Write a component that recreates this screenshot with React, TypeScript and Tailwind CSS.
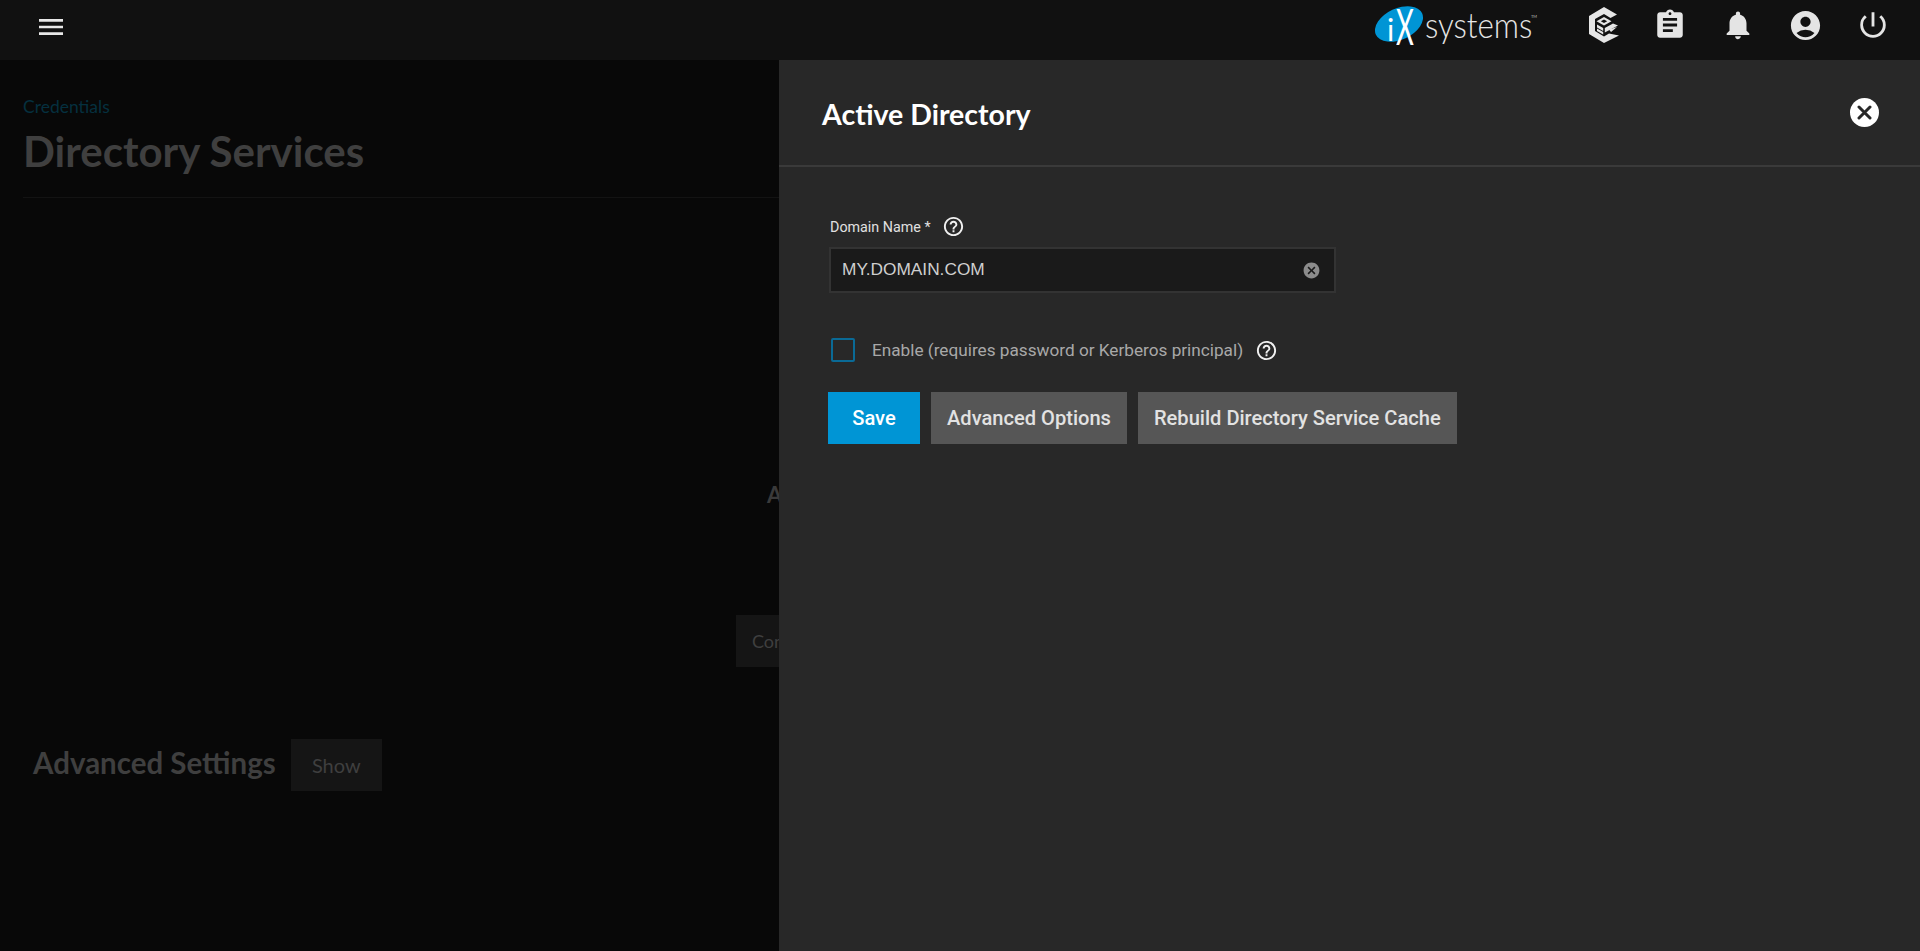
import React from 'react';
import { MdMenu, MdAssignment, MdNotifications, MdAccountCircle, MdPowerSettingsNew, MdCancel, MdHelpOutline } from 'react-icons/md';

const LABEL_FONT = "font-['Lato',sans-serif]";

// TrueCommand cube mark
const CubeMark = () => (
  <svg width="31" height="36" viewBox="0 0 31 36" fill="#e6e6e6">
    <path d="M15 0 L28 7.5 L21.5 11 L15 7 L6 12 V24 L15 29.5 L20 26.5 L30 28.5 L15 36 L0 27 V9 Z" />
    <path d="M15 10 L22.5 14.3 L15 18.6 L7.5 14.3 Z M15 12.6 L11.8 14.3 L15 16 L18.2 14.3 Z" fillRule="evenodd" />
    <path d="M8 17.5 L14.2 21 V24 L8 20.5 Z M15.8 21 L24 16.5 L29 18.5 L15.8 25.5 Z" />
    <path d="M8 21.5 L14.2 25 V27.5 L8 24 Z M20 22.5 L28 20 L22 25 Z" />
  </svg>
);

const IxLogo = () => (
  <div className="relative h-[44px] w-[156px]">
    <svg width="50" height="38" viewBox="0 0 50 38" className="absolute left-[-1px] top-[2px]">
      <ellipse cx="25" cy="19" rx="25.5" ry="15.6" fill="#0095d5" transform="rotate(-25 25 19)" />
    </svg>
    <span className="absolute left-[12px] top-[10px] font-['Lato',sans-serif] text-[30px] leading-[32px] text-white">i</span>
    <span className="absolute left-[21px] top-[-2px] origin-left scale-x-[0.55] font-['Lato',sans-serif] text-[50px] leading-[50px] text-white">X</span>
    <span className="absolute left-[50px] top-[1px] origin-left scale-x-[0.87] font-['Lato',sans-serif] text-[36px] font-light leading-[40px] text-[#e6e6e6]">systems</span>
    <span className="absolute left-[156px] top-[12px] font-['Lato',sans-serif] text-[4px] leading-none text-[#bbbbbb]">TM</span>
  </div>
);

const TopBar = () => (
  <header className="flex h-[60px] shrink-0 items-center bg-[#111111] pb-[10px] pl-[35px] pr-[30px] text-[#e4e4e4]">
    <MdMenu size={32} className="mt-[4px] text-[#e8e8e8]" />
    <div className="ml-auto mr-[58px]"><IxLogo /></div>
    <div className="mr-[33px]"><CubeMark /></div>
    <MdAssignment size={34} className="mr-[34px]" />
    <MdNotifications size={34} className="mr-[33px]" />
    <MdAccountCircle size={35} className="mr-[33px]" />
    <MdPowerSettingsNew size={34} />
  </header>
);

// dimmed page behind the slide-in panel
const Background = () => (
  <div className={`w-[779px] shrink-0 overflow-hidden bg-[#080808] pl-[23px] ${LABEL_FONT}`}>
    <div className="pt-[36px] text-[17.5px] leading-[22px] text-[#05303f]">Credentials</div>
    <h1 className="mt-[8px] text-[42px] font-bold leading-[50px] text-[#3f3f3f]">Directory Services</h1>
    <div className="mt-[21px] h-px bg-[#131313]" />
    <div className="whitespace-nowrap pl-[744px] pt-[285px] text-[22px] font-bold leading-[24px] text-[#3a3a3a]">Active Directory</div>
    <button className="mt-[108px] ml-[713px] h-[52px] w-[120px] bg-[#151515] pl-[16px] text-left text-[18px] text-[#3f3f3f]">Configure</button>
    <div className="mt-[72px] flex items-center pl-[10px]">
      <h2 className="mb-[4px] text-[29.5px] font-bold leading-[40px] text-[#3f3f3f]">Advanced Settings</h2>
      <button className="ml-[15px] h-[52px] w-[91px] bg-[#151515] text-[20px] text-[#3f3f3f]">Show</button>
    </div>
  </div>
);

const FormButton = ({ children, primary }: { children: React.ReactNode; primary?: boolean }) => (
  <button
    className={`h-[52px] px-[16px] text-[20.1px] font-medium font-['Roboto',sans-serif] ${
      primary ? 'w-[92px] bg-[#0095d5] text-white' : 'bg-[#565656] text-[#e2e2e2]'
    }`}
  >
    {children}
  </button>
);

const Panel = () => (
  <section className="flex min-w-0 flex-1 flex-col bg-[#282828]">
    <div className="flex h-[107px] items-center border-b-2 border-[#3a3a3a] pl-[43px] pr-[41px]">
      <h2 className="mt-[3px] font-['Lato',sans-serif] text-[28.5px] font-bold text-white">Active Directory</h2>
      <div className="ml-auto flex h-[29px] w-[29px] items-center justify-center rounded-full bg-white">
        <svg width="15" height="15" viewBox="0 0 15 15" stroke="#282828" strokeWidth="3" strokeLinecap="round">
          <path d="M2 2 L13 13 M13 2 L2 13" />
        </svg>
      </div>
    </div>
    <div className="pl-[50px] pt-[48px]">
      <div className="flex items-center">
        <label className="pl-[1px] font-['Roboto',sans-serif] text-[14.3px] leading-[20px] text-[#e0e0e0]">Domain Name *</label>
        <MdHelpOutline size={23} className="ml-[11px] text-[#f0f0f0]" />
      </div>
      <div className="mt-[9px] flex h-[46px] w-[507px] items-center justify-between border-2 border-[#333333] bg-[#1a1a1a] pl-[11px] pr-[13px]">
        <span className="font-['Liberation_Sans',sans-serif] text-[17.3px] text-[#cfcfcf]">MY.DOMAIN.COM</span>
        <MdCancel size={19} className="text-[#8c8c8c]" />
      </div>
      <div className="mt-[45px] flex items-center pl-[2px]">
        <span className="h-[24px] w-[24px] rounded-[2px] border-2 border-[#0a6a96]" />
        <span className="ml-[17px] font-['Roboto',sans-serif] text-[17.2px] leading-[24px] text-[#a8a8a8]">Enable (requires password or Kerberos principal)</span>
        <MdHelpOutline size={23} className="ml-[12px] text-[#f0f0f0]" />
      </div>
      <div className="mt-[30px] -ml-px flex gap-[11px]">
        <FormButton primary>Save</FormButton>
        <FormButton>Advanced Options</FormButton>
        <FormButton>Rebuild Directory Service Cache</FormButton>
      </div>
    </div>
  </section>
);

export default function App() {
  return (
    <div className="flex h-[951px] flex-col overflow-hidden bg-[#080808]">
      <TopBar />
      <main className="flex min-h-0 flex-1">
        <Background />
        <Panel />
      </main>
    </div>
  );
}
